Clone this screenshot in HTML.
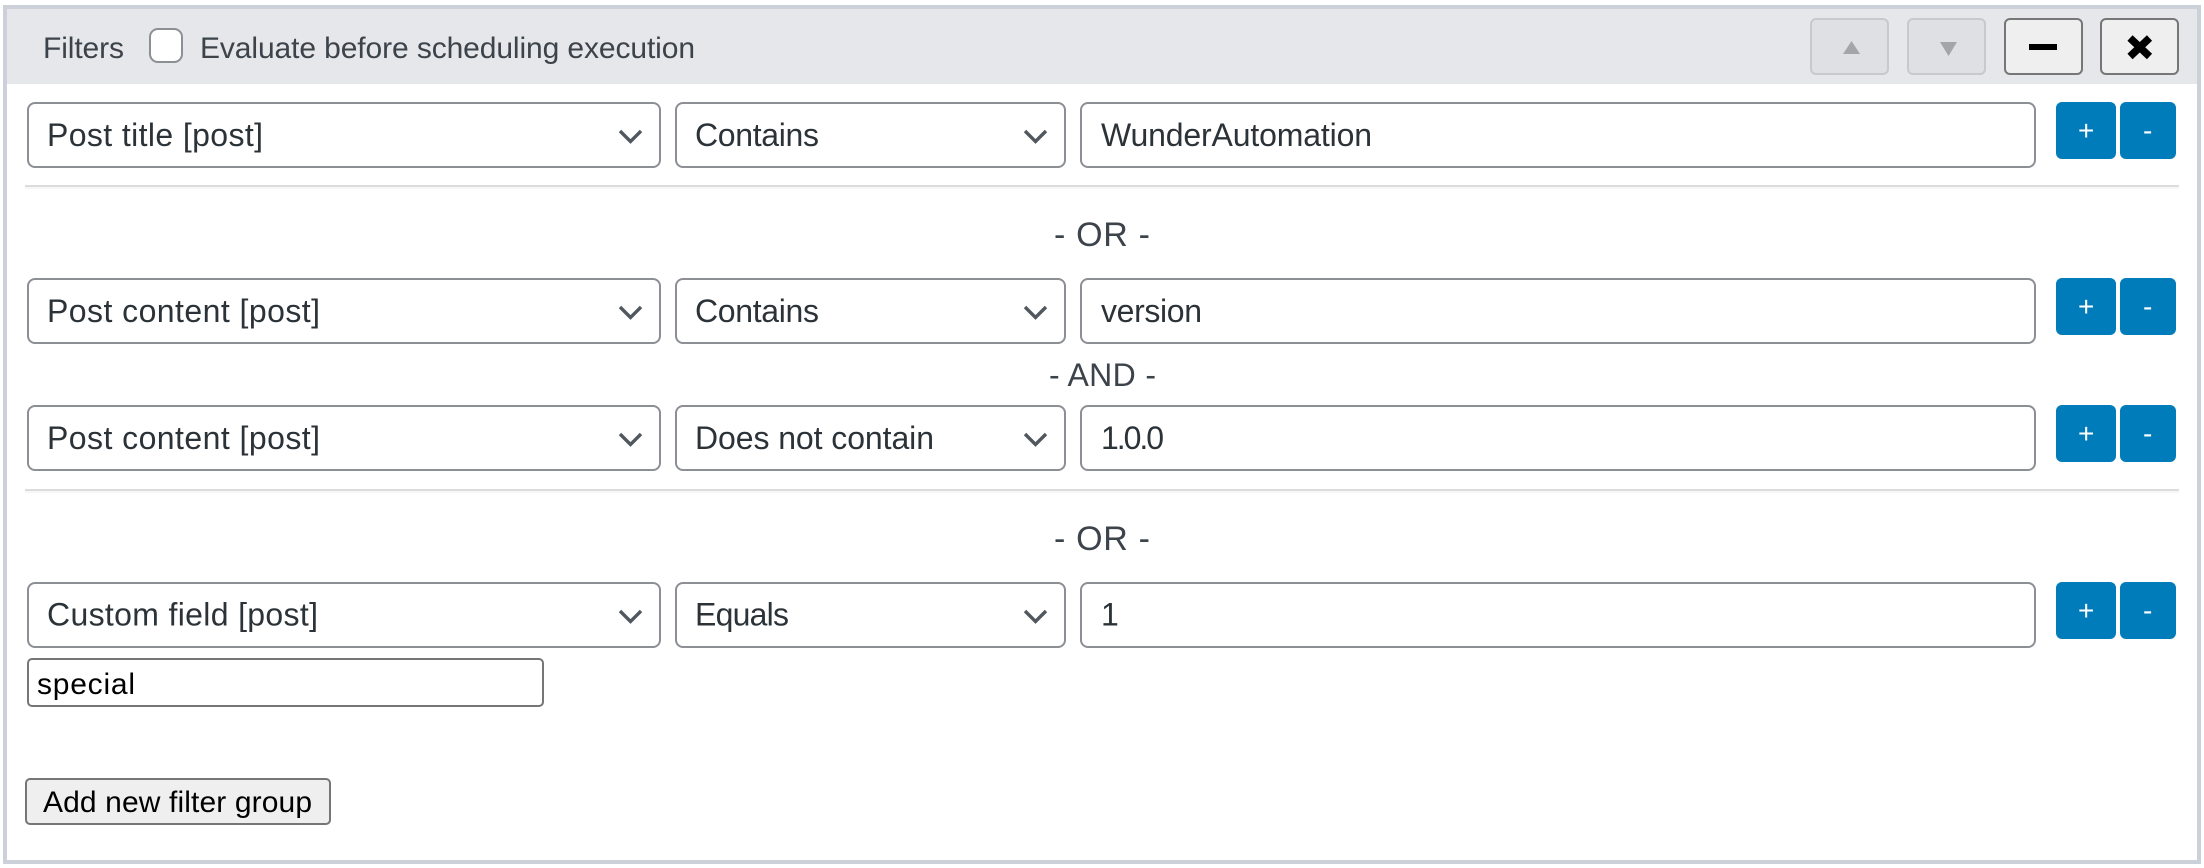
<!DOCTYPE html>
<html><head><meta charset="utf-8"><title>Filters</title>
<style>
html,body{margin:0;padding:0;background:#fff;width:2204px;height:868px;overflow:hidden}
svg{display:block}
text{font-family:"Liberation Sans",sans-serif;font-size:32px;fill:#2c3338}
.h{fill:#3c434a;font-size:30px}
.b{fill:#000;font-size:30px}
.s{fill:#fff;stroke:#8c8f94;stroke-width:2}
.c{fill:none;stroke:#50575e;stroke-width:3.4}
.p{fill:#007cba}
.w{fill:#fff;font-size:28px;text-anchor:start}
.d{fill:#dfe0e3;stroke:#c8c9cc;stroke-width:2}
.e{fill:#efefef;stroke:#767676;stroke-width:2}
</style></head><body>
<svg width="2204" height="868" viewBox="0 0 2204 868" xmlns="http://www.w3.org/2000/svg">
<rect x="0" y="0" width="2204" height="868" fill="#fff"/>
<rect x="5" y="7" width="2194" height="855" fill="#fff" stroke="#ccd0d9" stroke-width="4"/>
<rect x="7" y="9" width="2190" height="75" fill="#e5e7ea"/>
<text class="h" x="43" y="58" textLength="81">Filters</text>
<rect x="150" y="29" width="32" height="33" rx="8" fill="#fff" stroke="#8c8f94" stroke-width="2"/>
<text class="h" x="200" y="58" textLength="495">Evaluate before scheduling execution</text>

<rect class="d" x="1811" y="19" width="77" height="55" rx="5"/>
<path d="M1843 54L1851.500 41L1860 54Z" fill="#a5a5a7"/>
<rect class="d" x="1908" y="19" width="77" height="55" rx="5"/>
<path d="M1940 42L1957 42L1948.500 56Z" fill="#a5a5a7"/>
<rect class="e" x="2005" y="19" width="77" height="55" rx="5"/>
<rect x="2029" y="44" width="28" height="6" fill="#000"/>
<rect class="e" x="2101" y="19" width="77" height="55" rx="5"/>
<path d="M2130 38L2149.500 56.500M2149.500 38L2130 56.500" stroke="#000" stroke-width="7.500" fill="none"/>

<!-- row 1 -->
<rect class="s" x="28" y="103" width="632" height="64" rx="7"/>
<text x="47" y="146" textLength="216">Post title [post]</text>
<path class="c" d="M620 131L630.500 141.500L641 131"/>
<rect class="s" x="676" y="103" width="389" height="64" rx="7"/>
<text x="695" y="146" textLength="124">Contains</text>
<path class="c" d="M1025 131L1035.500 141.500L1046 131"/>
<rect class="s" x="1081" y="103" width="954" height="64" rx="7"/>
<text x="1101" y="146" textLength="271">WunderAutomation</text>
<rect class="p" x="2056" y="102" width="60" height="57" rx="6"/>
<rect class="p" x="2120" y="102" width="56" height="57" rx="6"/>
<text class="w" x="2078" y="140">+</text>
<text class="w" x="2143" y="140">-</text>

<rect x="25" y="185" width="2154" height="2" fill="#dcdcde"/>
<rect x="25" y="187" width="2154" height="2" fill="#f6f7f7"/>
<text x="1054" y="246" style="font-size:34px;fill:#3c434a" textLength="96">- OR -</text>

<!-- row 2 -->
<rect class="s" x="28" y="279" width="632" height="64" rx="7"/>
<text x="47" y="322" textLength="273">Post content [post]</text>
<path class="c" d="M620 307L630.500 317.500L641 307"/>
<rect class="s" x="676" y="279" width="389" height="64" rx="7"/>
<text x="695" y="322" textLength="124">Contains</text>
<path class="c" d="M1025 307L1035.500 317.500L1046 307"/>
<rect class="s" x="1081" y="279" width="954" height="64" rx="7"/>
<text x="1101" y="322" textLength="101">version</text>
<rect class="p" x="2056" y="278" width="60" height="57" rx="6"/>
<rect class="p" x="2120" y="278" width="56" height="57" rx="6"/>
<text class="w" x="2078" y="316">+</text>
<text class="w" x="2143" y="316">-</text>

<text x="1049" y="386" style="font-size:32px;fill:#3c434a" textLength="107">- AND -</text>

<!-- row 3 -->
<rect class="s" x="28" y="406" width="632" height="64" rx="7"/>
<text x="47" y="449" textLength="273">Post content [post]</text>
<path class="c" d="M620 434L630.500 444.500L641 434"/>
<rect class="s" x="676" y="406" width="389" height="64" rx="7"/>
<text x="695" y="449" textLength="239">Does not contain</text>
<path class="c" d="M1025 434L1035.500 444.500L1046 434"/>
<rect class="s" x="1081" y="406" width="954" height="64" rx="7"/>
<text x="1101" y="449" textLength="63">1.0.0</text>
<rect class="p" x="2056" y="405" width="60" height="57" rx="6"/>
<rect class="p" x="2120" y="405" width="56" height="57" rx="6"/>
<text class="w" x="2078" y="443">+</text>
<text class="w" x="2143" y="443">-</text>

<rect x="25" y="489" width="2154" height="2" fill="#dcdcde"/>
<rect x="25" y="491" width="2154" height="2" fill="#f6f7f7"/>
<text x="1054" y="550" style="font-size:34px;fill:#3c434a" textLength="96">- OR -</text>

<!-- row 4 -->
<rect class="s" x="28" y="583" width="632" height="64" rx="7"/>
<text x="47" y="625.500" textLength="271">Custom field [post]</text>
<path class="c" d="M620 611L630.500 621.500L641 611"/>
<rect class="s" x="676" y="583" width="389" height="64" rx="7"/>
<text x="695" y="625.500" textLength="94">Equals</text>
<path class="c" d="M1025 611L1035.500 621.500L1046 611"/>
<rect class="s" x="1081" y="583" width="954" height="64" rx="7"/>
<text x="1101" y="625.500">1</text>
<rect class="p" x="2056" y="582" width="60" height="57" rx="6"/>
<rect class="p" x="2120" y="582" width="56" height="57" rx="6"/>
<text class="w" x="2078" y="620">+</text>
<text class="w" x="2143" y="620">-</text>

<rect x="28" y="659" width="515" height="47" rx="4" fill="#fff" stroke="#767676" stroke-width="2"/>
<text class="b" x="37" y="694" textLength="98">special</text>

<rect class="e" x="26" y="779" width="304" height="45" rx="4"/>
<text class="b" x="43" y="812" textLength="269">Add new filter group</text>
</svg>
</body></html>
